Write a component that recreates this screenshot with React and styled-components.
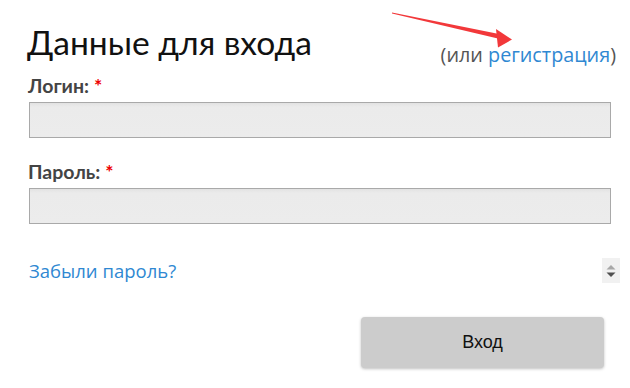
import React from "react";
import styled, { createGlobalStyle } from "styled-components";

const Global = createGlobalStyle`
  html, body { margin: 0; padding: 0; background: #fff; }
  body { font-family: Lato, "Open Sans", sans-serif; }
  * { box-sizing: border-box; }
`;

const Page = styled.div`
  position: relative;
  width: 630px;
  height: 388px;
  padding: 22px 10px 0 27px;
  overflow: hidden;
`;

const Header = styled.div`
  display: flex;
  justify-content: space-between;
  align-items: flex-start;
  width: 589px;
  height: 40px;
`;

const Title = styled.h1`
  margin: 0;
  font-family: Lato, sans-serif;
  font-weight: 400;
  font-size: 33.6px;
  line-height: 40px;
  color: #111;
`;

const Alt = styled.span`
  margin-top: 21px;
  font-family: "Open Sans", sans-serif;
  font-size: 19.8px;
  line-height: 24px;
  color: #555;
`;

const Link = styled.a`
  color: #2f88d2;
  text-decoration: none;
  font-family: "Open Sans", sans-serif;
  font-size: ${(p) => p.$size || 19.8}px;
`;

const Field = styled.div`
  display: flex;
  flex-direction: column;
  margin-top: ${(p) => p.$top}px;
`;

const Label = styled.label`
  font-family: Lato, sans-serif;
  font-weight: 700;
  font-size: 19.5px;
  line-height: 24px;
  color: #444;
  margin-left: 1px;
`;

const Star = styled.span`
  color: #e00;
  margin-left: 5px;
`;

const Input = styled.div`
  margin-top: 4.5px;
  margin-left: 2px;
  width: 582px;
  height: 36px;
  border: 1px solid #a9a9a9;
  background: linear-gradient(#e2e2e2 0px, #ebebeb 4px, #ececec 100%);
`;

const ForgotRow = styled.div`
  display: flex;
  justify-content: space-between;
  align-items: center;
  margin-top: 34px;
  margin-left: 2px;
`;

const Spinner = styled.div`
  width: 18px;
  height: 25px;
  background: #f1f1f1;
  display: flex;
  align-items: center;
  justify-content: center;
`;

const Actions = styled.div`
  display: flex;
  justify-content: flex-end;
  width: 577px;
  margin-top: 34px;
`;

const Button = styled.button`
  width: 243px;
  height: 51px;
  border: none;
  border-radius: 4px;
  background: #cccccc;
  box-shadow: 0 1px 3px rgba(0, 0, 0, 0.25);
  font-family: "Liberation Sans", Arial, sans-serif;
  font-size: 18px;
  color: #111;
`;

const Arrow = styled.svg`
  position: absolute;
  left: 0;
  top: 0;
  pointer-events: none;
`;

export default function App() {
  return (
    <>
      <Global />
      <Page>
        <Header>
          <Title>Данные для входа</Title>
          <Alt>
            (или <Link href="#">регистрация</Link>)
          </Alt>
        </Header>
        <Field $top={11.5}>
          <Label>
            Логин:<Star>*</Star>
          </Label>
          <Input />
        </Field>
        <Field $top={21.5}>
          <Label>
            Пароль:<Star>*</Star>
          </Label>
          <Input />
        </Field>
        <ForgotRow>
          <Link href="#" $size={18.5}>Забыли пароль?</Link>
          <Spinner>
            <svg width="12" height="16" viewBox="0 0 12 16">
              <path d="M6 2 L10.5 6.5 H1.5 Z" fill="#a8a8a8" />
              <path d="M6 14 L10.5 9.5 H1.5 Z" fill="#505050" />
            </svg>
          </Spinner>
        </ForgotRow>
        <Actions>
          <Button>Вход</Button>
        </Actions>
        <Arrow width="630" height="388">
          <path d="M392 12.5 L499 34 L500 39 L392 13.5 Z" fill="#f2383a" />
          <path d="M512 39.5 L496 29 L498 47.5 Z" fill="#f2383a" />
        </Arrow>
      </Page>
    </>
  );
}
